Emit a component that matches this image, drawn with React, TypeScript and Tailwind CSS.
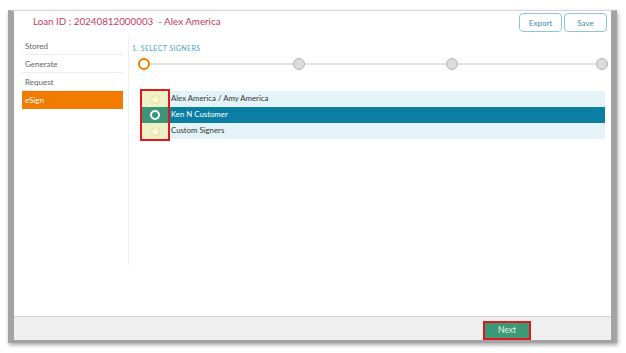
import React from "react";

const font = { fontFamily: 'Lato, "Open Sans", sans-serif' };

function Radio({ selected }: { selected: boolean }) {
  return selected ? (
    <div className="w-[10px] h-[10px] rounded-full border-2 border-white bg-[#3b9677]" />
  ) : (
    <div className="w-[9px] h-[9px] rounded-full bg-[#fbf8d2] border border-[#e3dea6]" />
  );
}

export default function App() {
  const side = ["Stored", "Generate", "Request"];
  const rows = [
    { label: "Alex America / Amy America", selected: false },
    { label: "Ken N Customer", selected: true },
    { label: "Custom Signers", selected: false },
  ];
  return (
    <div className="w-[626px] h-[353px] bg-white overflow-hidden pt-[10px] pl-[8px]" style={font}>
      <div className="w-[609px] h-[333px] flex flex-col border-l-[6px] border-r-[6px] border-b-[3px] border-t border-[#a3a3a3] border-t-[#d6d6d6] shadow-[1px_2px_4px_rgba(0,0,0,0.35)] bg-white">
        <div className="flex-1 flex flex-col">
          {/* header */}
          <div className="h-[26px] flex items-start justify-between pl-[19px] pr-[4px]">
            <div className="text-[9.8px] leading-[21px] text-[#c93a60] whitespace-pre">
              Loan ID : 20240812000003  - Alex America
            </div>
            <div className="flex gap-[2px] pt-[2px]">
              <button className="w-[43px] h-[19px] border border-[#8cc6d6] rounded-[4px] text-[8px] leading-none text-[#3a8fae]">
                Export
              </button>
              <button className="w-[43px] h-[19px] border border-[#8cc6d6] rounded-[4px] text-[8px] leading-none text-[#3a8fae]">
                Save
              </button>
            </div>
          </div>
          {/* body */}
          <div className="flex pl-[8px]">
            <div className="w-[101px] flex flex-col">
              {side.map((s) => (
                <div
                  key={s}
                  className="h-[18px] flex items-center pl-[3px] pt-px text-[8px] text-[#666] border-b border-[#ececec]"
                >
                  {s}
                </div>
              ))}
              <div className="h-[18px] flex items-center pl-[3px] text-[8px] text-white bg-[#f07b00]">
                eSign
              </div>
            </div>
            <div className="ml-[5px] w-px h-[228px] bg-[#efefef]" />
            <div className="flex-1 pl-[3px]">
              <div className="mt-[6px] text-[7px] leading-[10px] tracking-[0.4px] text-[#45a8c6]">
                1. SELECT SIGNERS
              </div>
              <div className="mt-[4px] pl-[6px] flex items-center h-[14px]">
                <div className="w-[12px] h-[12px] rounded-full border-2 border-[#f07b00] bg-white" />
                <div className="w-[143px] h-[2px] bg-[#e3e3e3]" />
                <div className="w-[12px] h-[12px] rounded-full border-[1.5px] border-[#b3b3b3] bg-[#dcdcdc]" />
                <div className="w-[141px] h-[2px] bg-[#e3e3e3]" />
                <div className="w-[12px] h-[12px] rounded-full border-[1.5px] border-[#b3b3b3] bg-[#dcdcdc]" />
                <div className="w-[138px] h-[2px] bg-[#e3e3e3]" />
                <div className="w-[12px] h-[12px] rounded-full border-[1.5px] border-[#b3b3b3] bg-[#dcdcdc]" />
              </div>
              <div className="relative mt-[20px] ml-[10px] w-[463px] flex flex-col">
                {rows.map((r) => (
                  <div
                    key={r.label}
                    className={`h-[16px] flex items-stretch ${r.selected ? "bg-[#0b7fa1]" : "bg-[#e4f3f7]"}`}
                  >
                    <div
                      className={`w-[26px] flex items-center justify-center ${r.selected ? "bg-[#3b9677]" : "bg-[#eef1c8]"}`}
                    >
                      <Radio selected={r.selected} />
                    </div>
                    <div
                      className={`pl-[3px] flex items-center text-[7.8px] ${r.selected ? "text-white" : "text-[#333]"}`}
                    >
                      {r.label}
                    </div>
                  </div>
                ))}
                <div className="absolute left-[-2px] top-[-2px] w-[30px] h-[52px] border-2 border-[#e2161f]" />
              </div>
            </div>
          </div>
        </div>
        {/* footer */}
        <div className="h-[24px] border-t border-[#d2d2d2] bg-[#f0f0f0] flex justify-end pr-[80px]">
          <button className="mt-[4px] w-[48px] h-[19px] border-2 border-[#e2161f] bg-[#3a9a78] text-[8.5px] leading-none text-[#eaf3d6]">
            Next
          </button>
        </div>
      </div>
    </div>
  );
}
